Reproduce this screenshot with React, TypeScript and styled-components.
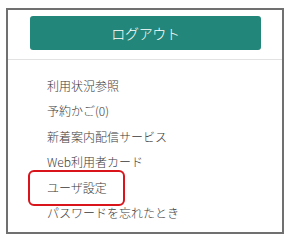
import React from 'react'
import styled, { createGlobalStyle } from 'styled-components'

const GlobalStyle = createGlobalStyle`
  body {
    margin: 0;
    background: #fff;
    font-family: "Noto Sans CJK JP", "Noto Sans", sans-serif;
  }
`

const Panel = styled.div`
  box-sizing: border-box;
  margin: 8px 0 0 6px;
  width: 278px;
  height: 226px;
  border: 2px solid #707070;
  background: #fff;
`

const ButtonArea = styled.div`
  padding: 6px 21px 9px 22px;
  border-bottom: 1px solid #e2e2e2;
`

const LogoutButton = styled.button`
  display: block;
  width: 100%;
  height: 34px;
  border: none;
  border-radius: 3px;
  background: #22877a;
  color: #fff;
  font-family: inherit;
  font-size: 14px;
  font-weight: 300;
  letter-spacing: -0.3px;
  cursor: pointer;
`

const Menu = styled.ul`
  list-style: none;
  margin: 0;
  padding: 13px 0 0 39px;
`

const MenuItem = styled.li`
  height: 25.4px;
  line-height: 25.4px;
  font-size: 12px;
  font-weight: 300;
  color: #3a3a3a;
`

const MenuLink = styled.a<{ $highlight?: boolean }>`
  position: relative;
  color: inherit;
  text-decoration: none;

  ${({ $highlight }) =>
    $highlight &&
    `
    &::after {
      content: '';
      position: absolute;
      left: -19px;
      right: -18px;
      top: -9px;
      bottom: -10px;
      border: 2.5px solid #d9141b;
      border-radius: 6px;
    }
  `}
`

const items = [
  '利用状況参照',
  '予約かご(0)',
  '新着案内配信サービス',
  'Web利用者カード',
  'ユーザ設定',
  'パスワードを忘れたとき',
]

export default function App() {
  return (
    <>
      <GlobalStyle />
      <Panel>
        <ButtonArea>
          <LogoutButton>ログアウト</LogoutButton>
        </ButtonArea>
        <Menu>
          {items.map((label) => (
            <MenuItem key={label}>
              <MenuLink href="#" $highlight={label === 'ユーザ設定'}>
                {label}
              </MenuLink>
            </MenuItem>
          ))}
        </Menu>
      </Panel>
    </>
  )
}
